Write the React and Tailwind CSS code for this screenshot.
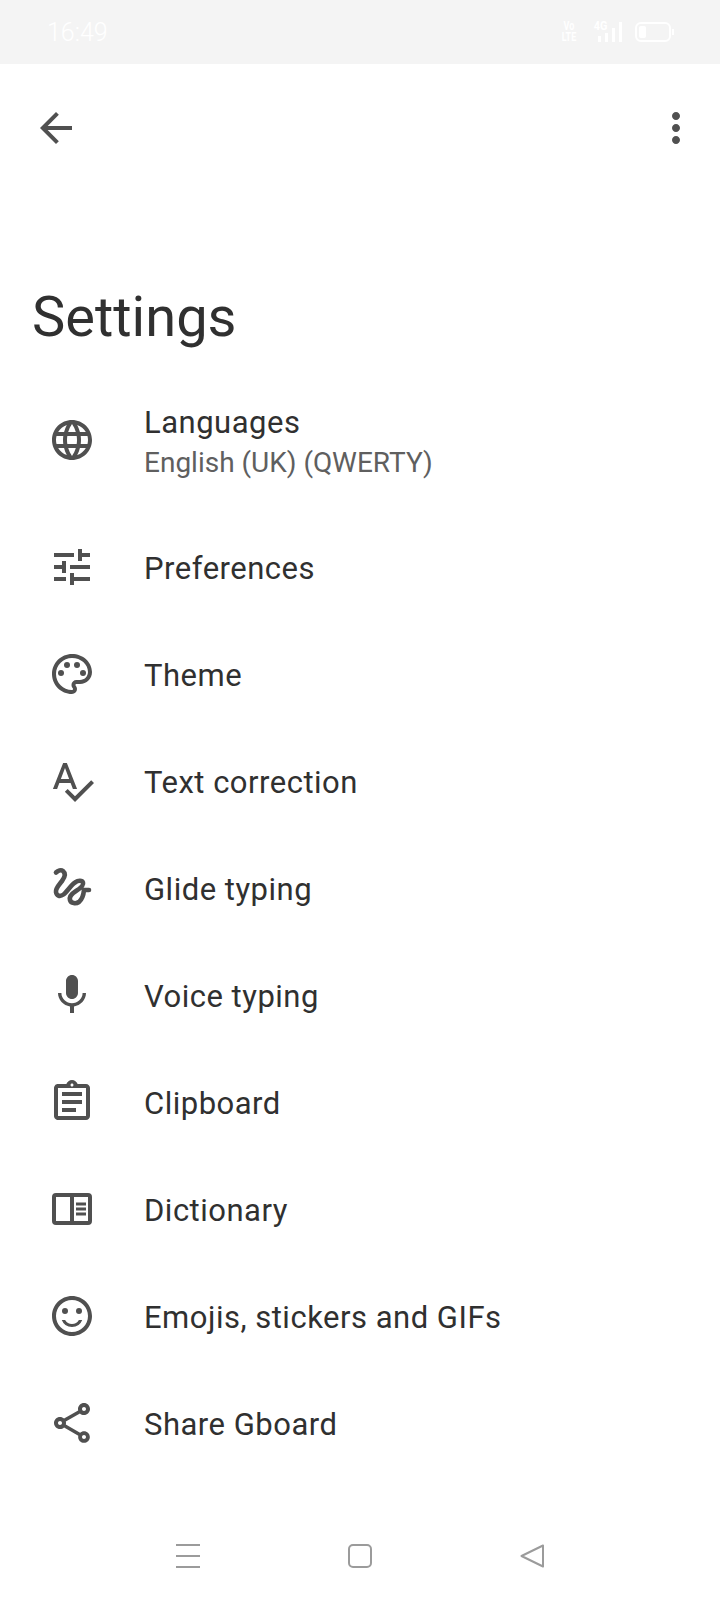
import React from 'react';
import {
  MdArrowBack,
  MdMoreVert,
  MdLanguage,
  MdTune,
  MdOutlinePalette,
  MdSpellcheck,
  MdMic,
  MdOutlineAssignment,
  MdOutlineSentimentSatisfiedAlt,
  MdOutlineShare,
} from 'react-icons/md';

// Gboard's squiggle, no package has it
const GlideIcon = ({ size, ...props }) => (
  <svg width={size} height={size} viewBox="0 0 48 48" fill="none" stroke="currentColor" strokeWidth="4.6" strokeLinecap="round" {...props}>
    <path d="M8 8.5 C10 6.5 13 5.5 15 7 C18 9.5 17 13 14 17 C11 21 7.5 24 8 28 C8.5 32 12 33 15.5 30.5 C19 28 23 21 27 18.5 C30 16.5 34 16 35 18.5 C36 21.5 32 24.5 28 27 C24 29.5 21 32.5 22 36 C23 39.5 28 40 31 38 C34 35.5 35.5 31 36 26 L41 26" />
  </svg>
);

const DictionaryIcon = ({ size, ...props }) => (
  <svg width={size} height={size} viewBox="0 0 48 48" fill="currentColor" {...props}>
    <rect x="6" y="10" width="36" height="28" rx="2" fill="none" stroke="currentColor" strokeWidth="4" />
    <rect x="22" y="10" width="4" height="28" />
    <rect x="28" y="17.5" width="10" height="3" />
    <rect x="28" y="22.5" width="10" height="3" />
    <rect x="28" y="27.5" width="10" height="3" />
  </svg>
);

const rows = [
  { icon: MdLanguage, label: 'Languages', sub: 'English (UK) (QWERTY)' },
  { icon: MdTune, label: 'Preferences' },
  { icon: MdOutlinePalette, label: 'Theme' },
  { icon: MdSpellcheck, label: 'Text correction' },
  { icon: GlideIcon, label: 'Glide typing' },
  { icon: MdMic, label: 'Voice typing' },
  { icon: MdOutlineAssignment, label: 'Clipboard' },
  { icon: DictionaryIcon, label: 'Dictionary' },
  { icon: MdOutlineSentimentSatisfiedAlt, label: 'Emojis, stickers and GIFs' },
  { icon: MdOutlineShare, label: 'Share Gboard' },
];

const StatusBar = () => (
  <div className="flex h-16 items-center justify-between bg-[#f4f4f4] pl-[47px] pr-[46px] text-white">
    <span className="text-[25px] font-light leading-none">16:49</span>
    <div className="flex items-center">
      <div className="flex w-[14px] scale-x-75 flex-col items-center text-[12px] font-bold leading-[11px]">
        <span>Vo</span>
        <span>LTE</span>
      </div>
      <div className="relative ml-[22px] flex h-5 items-end gap-[4px]">
        <span className="absolute -left-[5px] -top-[2px] scale-x-90 text-[12px] font-bold leading-[12px]">4G</span>
        <span className="h-[6px] w-[3px] bg-white" />
        <span className="h-[9px] w-[3px] bg-white" />
        <span className="h-[14px] w-[3px] bg-white" />
        <span className="h-5 w-[3px] bg-white" />
      </div>
      <div className="ml-[13px] h-5 w-[36px] rounded-[6px] border-2 border-white p-[2px]">
        <div className="h-full w-[7px] rounded-[2px] bg-white" />
      </div>
      <div className="ml-px h-[6px] w-[2px] bg-white" />
    </div>
  </div>
);

const App = () => {
  return (
    <div className="flex h-[1600px] w-[720px] flex-col bg-white font-['Roboto',sans-serif] text-[#303030]">
      <StatusBar />
      <div className="flex h-[128px] items-center justify-between pl-8 pr-[20px] text-[#505050]">
        <MdArrowBack size={48} />
        <MdMoreVert size={48} />
      </div>
      <h1 className="mt-[94px] pl-8 text-[56px] font-normal leading-[62px]">Settings</h1>
      <ul className="mt-[18px]">
        {rows.map((row) => (
          <li key={row.label} className={`flex items-center pl-12 ${row.sub ? 'h-[147px]' : 'h-[107px]'}`}>
            <row.icon size={48} className="shrink-0 text-[#505050]" />
            <div className={`ml-[48px] ${row.sub ? 'pt-[6px]' : 'pt-1'}`}>
              <div className="text-[31px] leading-[40px] tracking-[0.5px]">{row.label}</div>
              {row.sub && <div className="text-[28px] leading-[40px] text-[#5f5f5f]">{row.sub}</div>}
            </div>
          </li>
        ))}
      </ul>
      <div className="mt-auto flex h-[96px] items-start justify-center">
        <div className="flex w-[368px] items-center justify-between pt-[40px] text-[#9b9b9b]">
          <div className="flex h-6 w-6 flex-col justify-between">
            <span className="h-[2px] bg-[#9b9b9b]" />
            <span className="h-[2px] bg-[#9b9b9b]" />
            <span className="h-[2px] bg-[#9b9b9b]" />
          </div>
          <div className="h-6 w-6 rounded-[5px] border-2 border-[#9b9b9b]" />
          <svg width="24" height="24" viewBox="0 0 24 24" fill="none" stroke="currentColor" strokeWidth="2" strokeLinejoin="round">
            <path d="M23 1.5 L1.5 12 L23 22.5 Z" />
          </svg>
        </div>
      </div>
    </div>
  );
};

export default App;
